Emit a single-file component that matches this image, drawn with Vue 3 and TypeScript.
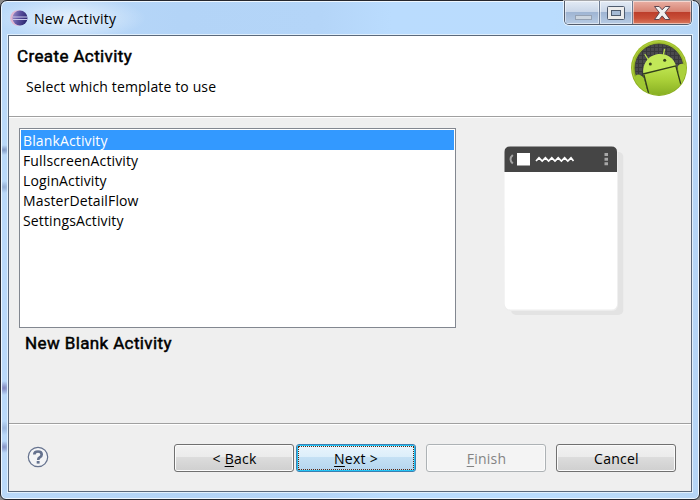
<script setup lang="ts">
import { ref } from 'vue'

interface WizardButton {
  id: string
  before: string
  key: string
  after: string
  disabled?: boolean
}

const templates: string[] = [
  'BlankActivity',
  'FullscreenActivity',
  'LoginActivity',
  'MasterDetailFlow',
  'SettingsActivity',
]
const selected = ref<string>('BlankActivity')

const buttons: WizardButton[] = [
  { id: 'back', before: '< ', key: 'B', after: 'ack' },
  { id: 'next', before: '', key: 'N', after: 'ext >' },
  { id: 'finish', before: '', key: 'F', after: 'inish', disabled: true },
  { id: 'cancel', before: 'Cancel', key: '', after: '' },
]
</script>

<template>
  <div class="desktop">
    <div class="window">
      <div class="titlebar">
        <svg class="app-icon" width="18" height="18" viewBox="0 0 18 18">
          <defs>
            <linearGradient id="ecl" x1="0" y1="0" x2="1" y2="0.3">
              <stop offset="0" stop-color="#a093cc" />
              <stop offset="0.5" stop-color="#5c52a0" />
              <stop offset="1" stop-color="#302b74" />
            </linearGradient>
          </defs>
          <circle cx="8" cy="9" r="7.8" fill="#dfb6d2" />
          <circle cx="10" cy="9" r="7.5" fill="url(#ecl)" />
          <path d="M3 8h14.300M3 10.500h14.300" stroke="#c9c8ea" stroke-width="1" />
        </svg>
        <span class="title">New Activity</span>
        <div class="controls">
          <span class="ctl min">
            <svg width="35" height="25" viewBox="0 0 35 25">
              <rect x="10.5" y="15.5" width="16" height="4" fill="#cbd5e0" stroke="#94a1b3" />
            </svg>
          </span>
          <span class="ctl max">
            <svg width="33" height="25" viewBox="0 0 33 25">
              <rect x="7.5" y="6.5" width="17" height="13" rx="1" fill="#ececec" stroke="#4e5b6e" />
              <rect x="11.5" y="10.5" width="9" height="5" fill="#a5bad5" stroke="#4e5b6e" />
            </svg>
          </span>
          <span class="ctl close">
            <svg width="59" height="25" viewBox="0 0 59 25">
              <path
                d="M21.500 6.500h4.700l3 3.300 3-3.300h4.700l-4.900 6.200 4.900 6.800h-4.700l-3-3.600-3 3.600h-4.700l4.900-6.800z"
                fill="#f0f0f0"
                stroke="#5b4650"
                stroke-linejoin="round"
              />
            </svg>
          </span>
        </div>
      </div>

      <div class="client">
        <header class="banner">
          <div class="banner-text">
            <h1>Create Activity</h1>
            <p>Select which template to use</p>
          </div>
          <svg class="android" width="58" height="58" viewBox="0 0 58 58">
            <defs>
              <linearGradient id="ring" x1="0" y1="0" x2="0" y2="1">
                <stop offset="0" stop-color="#a3c22e" />
                <stop offset="1" stop-color="#85a91d" />
              </linearGradient>
              <linearGradient id="bot" x1="0" y1="0" x2="0" y2="1">
                <stop offset="0" stop-color="#c0e552" />
                <stop offset="0.45" stop-color="#aad038" />
                <stop offset="1" stop-color="#83ab20" />
              </linearGradient>
              <pattern id="grid" width="4" height="4" patternUnits="userSpaceOnUse">
                <rect width="4" height="4" fill="#4a4a4d" />
                <path d="M0 .5h4M.5 0v4" stroke="#38383b" />
              </pattern>
              <clipPath id="disc"><circle cx="29" cy="29" r="27" /></clipPath>
            </defs>
            <circle cx="29" cy="29" r="28" fill="url(#ring)" />
            <circle cx="29" cy="29" r="26.500" fill="none" stroke="#b0cf40" stroke-width="1" />
            <circle cx="29" cy="29" r="24" fill="url(#grid)" stroke="#38383b" stroke-width="0.800" />
            <g clip-path="url(#disc)">
              <path d="M13.300 35l32.700-8L53 44 46 58H19z" fill="url(#bot)" />
              <path d="M13.300 35C12 25 18 17 26 15.400C35 13.500 44 18 46 27z" fill="#c2e858" />
              <path d="M5 38q2-4 6-1.500q2 1 3 3l5 19L6 50z" fill="#a0c832" />
              <path d="M47.500 28q2-4 6-3q4 2 3.500 12l-6 10z" fill="#abd13b" />
              <path d="M13 35l33-8.100M14 36l5 20M46 27.500l5 18.500" stroke="#33401a" stroke-width="1.300" fill="none" />
              <path d="M15 15.500l2.900 4.700M34.500 10.500l-1 4.800" stroke="#b8df4b" stroke-width="1.300" stroke-linecap="round" />
              <circle cx="20.300" cy="25" r="1.500" fill="#37421b" />
              <circle cx="34.700" cy="21.300" r="1.500" fill="#37421b" />
            </g>
          </svg>
        </header>

        <main class="body">
          <div class="left">
            <ul class="list">
              <li
                v-for="t in templates"
                :key="t"
                :class="{ active: t === selected }"
                @click="selected = t"
              >
                {{ t }}
              </li>
            </ul>
            <p class="desc">New Blank Activity</p>
          </div>
          <svg class="phone" width="122" height="172" viewBox="502 145 122 172">
            <rect x="511" y="152" width="112.300" height="163" rx="5" fill="#e3e3e3" />
            <rect x="504.500" y="147" width="113.500" height="164" rx="6" fill="#ededed" />
            <path d="M504.500 171h112.700v133a5.500 5.500 0 0 1-5.500 5.500h-101.500a5.500 5.500 0 0 1-5.500-5.500z" fill="#fff" />
            <path d="M504.500 172v-20q0-5.500 5.500-5.500h101.500q5.500 0 5.500 5.500v20z" fill="#454545" />
            <path d="M512.800 155q-4.600 4.200 0 8.500" stroke="#a4a4a4" stroke-width="2" fill="none" />
            <rect x="517" y="153" width="13" height="12.500" fill="#fff" />
            <path
              d="M536 161l3-3.200 3.200 3.200 3.200-3.200 3.200 3.200 3.200-3.200 3.200 3.200 3.200-3.200 3.200 3.200 3.200-3.200 3.200 3.200 3.200-3.200 2.500 3.200"
              stroke="#fff"
              stroke-width="1.700"
              fill="none"
            />
            <path d="M604.500 153h3.500v3h-3.500zM604.500 157.700h3.500v3h-3.500zM604.500 162.300h3.500v3h-3.500z" fill="#a8a8a8" />
          </svg>
        </main>

        <footer class="footer">
          <svg class="help" width="22" height="22" viewBox="0 0 22 22">
            <circle cx="11" cy="11" r="9.700" fill="#f3f4f6" stroke="#65728e" stroke-width="1.200" />
            <path d="M7.300 8.500q0-3 3.700-3t3.700 3q0 1.700-2 2.900q-1.500.9-1.500 2.500" fill="none" stroke="#65728e" stroke-width="2.700" />
            <rect x="9.700" y="15" width="2.900" height="2.600" fill="#65728e" />
          </svg>
          <div class="buttons">
            <button
              v-for="b in buttons"
              :key="b.id"
              type="button"
              :class="['btn', b.id]"
              :disabled="b.disabled"
            ><span>{{ b.before }}<u>{{ b.key }}</u>{{ b.after }}</span></button>
          </div>
        </footer>
      </div>
    </div>
  </div>
</template>

<style>
body {
  margin: 0;
}
</style>

<style scoped>
* {
  box-sizing: border-box;
}
.desktop {
  width: 700px;
  height: 500px;
  background: #8a8a8a;
  font-family: 'Open Sans', 'Noto Sans', sans-serif;
  font-size: 14px;
  letter-spacing: 0.13px;
  color: #000;
}
.window {
  width: 700px;
  height: 500px;
  display: flex;
  flex-direction: column;
  padding: 0 7px 7px;
  border: 1px solid #25272e;
  border-radius: 7px 7px 6px 6px;
  box-shadow: inset 0 0 0 1px #eef7ff;
  background:
    radial-gradient(ellipse 75px 22px at 70px 17px, rgba(255, 255, 255, 0.65), transparent),
    radial-gradient(ellipse 8px 5px at 3px 149px, rgba(90, 110, 160, 0.6), transparent),
    radial-gradient(ellipse 8px 6px at 3px 186px, rgba(100, 120, 165, 0.45), transparent),
    radial-gradient(ellipse 8px 7px at 3px 387px, rgba(90, 80, 150, 0.6), transparent),
    radial-gradient(ellipse 8px 7px at 3px 427px, rgba(100, 120, 170, 0.35), transparent),
    radial-gradient(ellipse 8px 6px at 3px 446px, rgba(90, 90, 155, 0.55), transparent),
    linear-gradient(90deg, #bad9f9 0, #b3d4f7 180px, #b4d5f8 320px, #badcfe 390px, #badcfd 550px, #bad9f7 650px, #b5d5f6 100%);
}
.titlebar {
  height: 34px;
  flex: none;
  display: flex;
  align-items: flex-start;
  padding-left: 2px;
}
.app-icon {
  margin-top: 8px;
}
.title {
  margin: 8px 0 0 6px;
  line-height: 20px;
  letter-spacing: 0.22px;
}
.controls {
  display: flex;
  margin-left: auto;
  height: 24px;
  width: 128px;
  border: 1px solid #535c6c;
  border-top: 0;
  border-radius: 0 0 5px 5px;
  overflow: hidden;
  box-shadow: 0 0 0 1px rgba(255, 255, 255, 0.6);
}
.ctl {
  display: block;
  box-shadow: inset 0 0 0 1px rgba(255, 255, 255, 0.5);
}
.ctl svg {
  display: block;
  margin-top: -1px;
}
.min,
.max {
  background: linear-gradient(#e3ebf5 0, #c9d6e8 47%, #9fb5d3 50%, #b7cbe4 100%);
  border-right: 1px solid #6e7c92;
}
.min {
  width: 35px;
}
.max {
  width: 33px;
}
.close {
  width: 58px;
  background: linear-gradient(#e9b0a4 0, #d78373 47%, #bd3e2b 50%, #c94e37 75%, #d97b60 100%);
}
.client {
  flex: 1;
  display: flex;
  flex-direction: column;
  border: 1px solid #5b697b;
  background: #efefef;
  box-shadow: 0 0 0 1px #e1f0fd;
}
.banner {
  height: 82px;
  flex: none;
  display: flex;
  justify-content: space-between;
  background: #fff;
  border-bottom: 1px solid #fff;
  box-shadow: inset 0 -1px #a0a0a0;
  padding: 3px 3px 0 8px;
}
h1,
.desc {
  font: 400 17px/20px Roboto, sans-serif;
  letter-spacing: 0.38px;
  -webkit-text-stroke: 0.5px #000;
}
h1 {
  margin: 7px 0 0;
}
.banner-text p {
  margin: 11px 0 0 9px;
  line-height: 20px;
}
.body {
  flex: 1;
  display: flex;
  padding: 10px 0 0 10px;
}
.left {
  width: 437px;
}
.list {
  height: 200px;
  margin: 0;
  padding: 1px;
  list-style: none;
  background: #fff;
  border: 1px solid #828790;
}
.list li {
  height: 20px;
  line-height: 20px;
  padding: 1px 2px 0;
}
.list li.active {
  background: #3399ff;
  color: #fff;
}
.desc {
  margin: 5px 0 0 6px;
}
.phone {
  margin: 17px 0 0 46px;
}
.footer {
  height: 68px;
  flex: none;
  display: flex;
  justify-content: space-between;
  border-top: 1px solid #a0a0a0;
  box-shadow: inset 0 1px #fff;
  padding: 20px 15px 0 18px;
}
.help {
  margin-top: 2px;
}
.buttons {
  display: flex;
}
.btn {
  width: 120px;
  height: 28px;
  padding: 0 0 0 1px;
  margin: 0;
  font: inherit;
  letter-spacing: 0.25px;
  line-height: 24px;
  color: #000;
  border: 1px solid #707070;
  border-radius: 3px;
  box-shadow: inset 0 0 0 1px #fbfbfb;
  background: linear-gradient(#f2f2f2 0, #ebebeb 46%, #dcdcdc 48%, #cfcfcf 100%);
}
.btn span {
  display: block;
  padding-top: 1px;
}
.btn u {
  text-underline-offset: 2px;
  text-decoration-thickness: 1px;
  text-decoration-skip-ink: none;
}
.btn.next {
  margin-left: 2px;
  padding: 1px;
  border-color: #3c7fb1;
  box-shadow: inset 0 0 0 1px #22c5f5;
  background: linear-gradient(#eaf5fc 0, #dceefa 46%, #c4e0f4 48%, #b4d5ee 100%);
}
.btn.next span {
  height: 24px;
  line-height: 22px;
  border: 1px dotted #5c2a12;
}
.btn.finish {
  margin-left: 10px;
  color: #838383;
  border-color: #adb2b5;
  background: #f4f4f4;
}
.btn.cancel {
  margin-left: 10px;
}
</style>
